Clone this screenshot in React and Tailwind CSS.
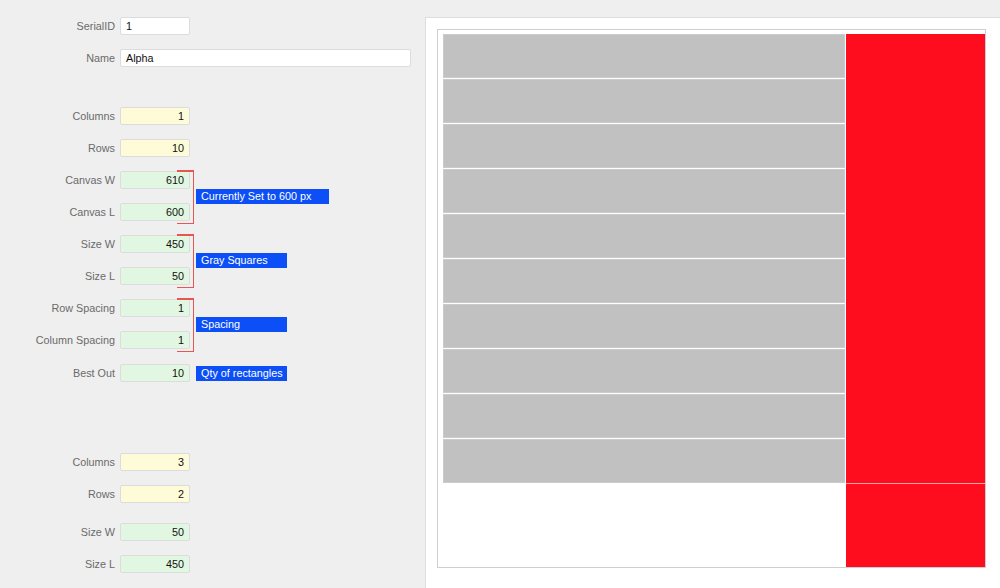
import React from "react";

const FONT = { fontFamily: '"Liberation Sans", Arial, Helvetica, sans-serif' };

function Field({ label, value, color = "white", wide = false, align = "right", className = "" }) {
  const bg =
    color === "yellow" ? "bg-[#fefbd8]" : color === "green" ? "bg-[#e1f7e1]" : "bg-white";
  return (
    <div className={"flex items-center h-[18px] " + className}>
      <div className="w-[115px] text-right text-[10.8px] text-[#6a6a6a] leading-none">{label}</div>
      <div
        className={
          "ml-[5px] h-[18px] rounded-[2px] border border-[#dcdcdc] flex items-center text-[10.8px] text-[#111] leading-none " +
          bg +
          " " +
          (wide ? "w-[291px]" : "w-[70px]") +
          " " +
          (align === "right" ? "justify-end pr-[5px]" : "justify-start pl-[5px]")
        }
      >
        {value}
      </div>
    </div>
  );
}

function Tag({ children, className = "" }) {
  return (
    <div
      className={
        "h-[15px] bg-[#0c4ff6] text-white text-[10.8px] leading-none flex items-center pl-[5px] pr-[4px] " +
        className
      }
    >
      {children}
    </div>
  );
}

function Bracket() {
  return (
    <div className="absolute left-[177px] top-[-1px] w-[17px] h-[54px]">
      <div className="absolute left-0 right-0 top-0 h-[1.5px] bg-[#ea5454]" />
      <div className="absolute left-0 right-0 bottom-0 h-[1.5px] bg-[#ea5454]" />
      <div className="absolute right-0 top-0 bottom-0 w-[1.5px] bg-[#ea5454]" />
    </div>
  );
}

function Group({ a, b, tag, tagW }) {
  return (
    <div className="relative flex flex-col gap-[14px]">
      <Field label={a[0]} value={a[1]} color="green" />
      <Field label={b[0]} value={b[1]} color="green" />
      <Bracket />
      <Tag className={"absolute left-[196px] top-[18px] " + tagW}>{tag}</Tag>
    </div>
  );
}

export default function App() {
  const rows = Array.from({ length: 10 });
  return (
    <div style={FONT} className="w-[1000px] h-[588px] overflow-hidden bg-[#efefef] flex">
      <div className="w-[425px] shrink-0 flex flex-col pt-[17px]">
        <Field label="SerialID" value="1" align="left" />
        <Field label="Name" value="Alpha" wide align="left" className="mt-[14px]" />
        <div className="mt-[40px] flex flex-col gap-[14px]">
          <Field label="Columns" value="1" color="yellow" />
          <Field label="Rows" value="10" color="yellow" />
          <Group a={["Canvas W", "610"]} b={["Canvas L", "600"]} tag="Currently Set to 600 px" tagW="w-[133px]" />
          <Group a={["Size W", "450"]} b={["Size L", "50"]} tag="Gray Squares" tagW="w-[91px]" />
          <Group a={["Row Spacing", "1"]} b={["Column Spacing", "1"]} tag="Spacing" tagW="w-[91px]" />
          <div className="flex items-center mt-[1px]">
            <Field label="Best Out" value="10" color="green" />
            <Tag className="ml-[6px] w-[91px]">Qty of rectangles</Tag>
          </div>
        </div>
        <div className="mt-[71px] flex flex-col gap-[14px]">
          <Field label="Columns" value="3" color="yellow" />
          <Field label="Rows" value="2" color="yellow" />
        </div>
        <div className="mt-[20px] flex flex-col gap-[14px]">
          <Field label="Size W" value="50" color="green" />
          <Field label="Size L" value="450" color="green" />
        </div>
      </div>
      <div className="mt-[17px] flex-1 bg-white border-l border-t border-[#dedede] pl-[11px] pt-[11px]">
        <div className="w-[549px] h-[539px] border border-[#cfcfcf] bg-white flex items-stretch pt-[4px] pl-[5px]">
          <div className="w-[402px] self-start flex flex-col gap-px">
            {rows.map((_, i) => (
              <div key={i} className="h-[44px] bg-[#c1c1c1] border border-[#cbcbcb]" />
            ))}
          </div>
          <div className="w-px" />
          <div className="w-[139px] flex flex-col">
            <div className="h-[449px] bg-[#fd0d1d]" />
            <div className="h-px bg-[#f9a3aa]" />
            <div className="flex-1 bg-[#fd0d1d]" />
          </div>
        </div>
      </div>
    </div>
  );
}
